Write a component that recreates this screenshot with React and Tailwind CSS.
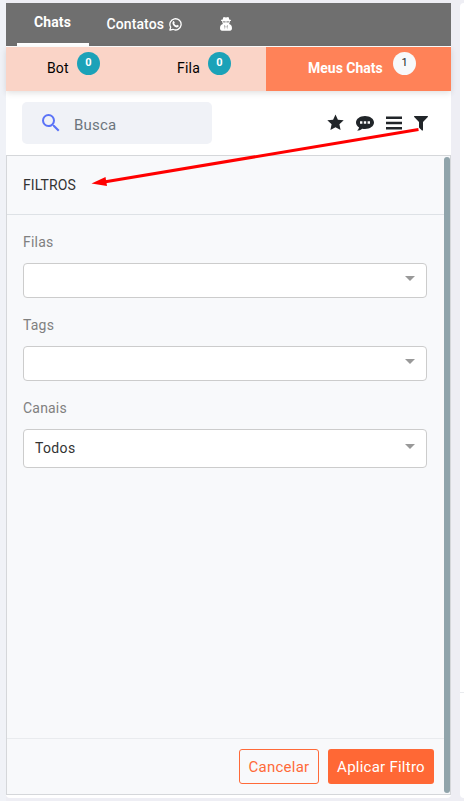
import React from "react";
import { MdSearch } from "react-icons/md";

function StarIcon() {
  return (
    <svg width="17" height="17" viewBox="0 0 17 17" className="block">
      <path fill="#212529" d="M8.500 .4 10.900 5.700 16.700 6.300 12.400 10.300 13.600 16.100 8.500 13.200 3.400 16.100 4.600 10.300 .3 6.300 6.100 5.700Z" />
    </svg>
  );
}

function CommentIcon() {
  return (
    <svg width="18" height="17" viewBox="0 0 18 17" className="block">
      <path
        fill="#212529"
        fillRule="evenodd"
        d="M9 1C4 1 0 3.900 0 7.500c0 2 1.200 3.700 3.100 4.900-.3 1.300-1 2.300-2 3.200 1.900 0 3.700-.7 5.200-1.900.9.200 1.800.3 2.700.3 5 0 9-2.900 9-6.500S14 1 9 1ZM4 6.300h2.400v2.400H4Zm3.800 0h2.400v2.400H7.800Zm3.800 0H14v2.400h-2.400Z"
      />
    </svg>
  );
}

function BarsIcon() {
  return (
    <svg width="16" height="14" viewBox="0 0 16 14" className="block">
      <path fill="#212529" d="M0 .5h16v2.500H0ZM0 5.700h16v2.500H0ZM0 10.900h16v2.500H0Z" />
    </svg>
  );
}

function FilterIcon() {
  return (
    <svg width="14" height="15" viewBox="0 0 14 15" className="block">
      <path fill="#212529" d="M.6 0h12.800c.6 0 .8.600.4 1L9 6v8c0 .6-.6.800-1 .4l-2.600-2.500c-.3-.3-.4-.5-.4-.9V6L.2 1C-.2.600 0 0 .6 0Z" />
    </svg>
  );
}

function WhatsappIcon() {
  return (
    <svg width="13" height="13" viewBox="0 0 13 13" className="block">
      <path
        fill="none"
        stroke="#fff"
        strokeWidth="1.300"
        strokeLinejoin="round"
        d="M.9 12.100 1.700 9.200A5.600 5.600 0 1 1 3.900 11.300Z"
      />
      <path
        fill="#fff"
        d="M4.200 3.300c.3-.3.800-.3 1 .1l.5 1.200c.1.300-.1.500-.5 1 .5 1 1.200 1.600 2.200 2 .5-.5.700-.9 1-.7l1.200.6c.3.200.2.700 0 1.100-.3.600-1.300 1-2 .8C5.700 8.900 4.300 7.700 3.600 5.900c-.3-.9-.1-1.900.6-2.600Z"
      />
    </svg>
  );
}

function SecretIcon() {
  return (
    <svg width="12" height="14" viewBox="0 0 12 14" className="block">
      <path
        fill="#fff"
        d="M3.900 0 6 .6 8.100 0c.6 0 1 1.400 1.200 2.500 1 .2 1.700.5 1.700.9 0 .3-.4.500-1.100.7-.1 1-.3 2-.8 2.900 1.700.4 2.900 1.600 2.900 4 0 1.800-.8 2.700-2 2.700H2c-1.200 0-2-.9-2-2.700 0-2.400 1.200-3.600 2.900-4-.5-.9-.7-1.900-.8-2.900C1.400 3.900 1 3.700 1 3.400c0-.4.700-.7 1.700-.9C2.900 1.400 3.300 0 3.900 0Z"
      />
      <path fill="#8d8d8d" d="M2.900 4.300h2.700v1.200H3.300ZM6.400 4.300h2.700l-.4 1.200H6.400ZM4.100 8l1.300 1-.5 3.400ZM7.900 8 6.600 9l.5 3.400Z" />
    </svg>
  );
}

function Tab({ label, count, className, labelClass, badgeClass }) {
  return (
    <div className={"flex h-full " + className}>
      <span className={"mt-[11px] text-[14px] leading-[20px] whitespace-nowrap " + labelClass}>{label}</span>
      <span className={"mt-[5px] flex h-[23px] w-[23px] justify-center rounded-full text-[11px] leading-[21px] " + badgeClass}>
        {count}
      </span>
    </div>
  );
}

function Field({ label, value, box }) {
  return (
    <div className="mb-[18px]">
      <div className="mb-[11px] h-[19px] text-[14px] leading-[19px] tracking-[0.2px] text-[#808080]">{label}</div>
      <div className={"flex justify-between rounded-[4px] border border-[#ccc] bg-white pr-[11px] pl-[11px] " + box}>
        <span className="mb-px self-center text-[14px] leading-[20px] tracking-[0.35px] text-[#333]">{value}</span>
        <span
          className={
            "mr-[0.5px] h-0 w-0 border-x-[5.5px] border-t-[5px] border-x-transparent border-t-[#999] " +
            (value ? "mt-[14px]" : "mt-[12px]")
          }
        />
      </div>
    </div>
  );
}

export default function App() {
  return (
    <div className="relative flex h-[801px] w-[464px] overflow-hidden bg-[#eeeef4] font-[Roboto,sans-serif]">
      <div className="w-[6px] shrink-0 bg-[#f0f2f7]" />
      <div className="mt-[3px] flex h-[795px] w-[445px] shrink-0 flex-col rounded-b-[4px] bg-white">
        <nav className="flex h-[43px] shrink-0 bg-[#6f6f6f] text-[14px] text-white">
          <div className="ml-[11px] h-[43px] w-[72px] border-b-[3px] border-white pt-[9px] pl-[17px] leading-[20px] font-bold tracking-[0.1px]">
            Chats
          </div>
          <div className="flex h-[42px] w-[94px] items-center pl-[17.500px] font-medium tracking-[0.1px]">
            <span className="w-[62px]">Contatos</span>
            <WhatsappIcon />
          </div>
          <div className="flex h-[42px] items-center pl-[37px]">
            <SecretIcon />
          </div>
        </nav>
        <div className="mt-px flex h-[44px] shrink-0 text-black shadow-[0_2px_6px_rgba(0,0,0,0.12)]">
          <Tab label="Bot" count="0" className="w-[130px] bg-[#fad4c7]" labelClass="ml-[41px] w-[30px] tracking-[0.1px]" badgeClass="bg-[#1ba2b8] font-bold text-white" />
          <Tab label="Fila" count="0" className="w-[130px] bg-[#fad4c7]" labelClass="ml-[41px] w-[31px] tracking-[0.2px]" badgeClass="bg-[#1ba2b8] font-bold text-white" />
          <Tab label="Meus Chats" count="1" className="w-[185px] bg-[#ff8258]" labelClass="ml-[42px] w-[85px] font-bold text-white" badgeClass="bg-[#f8f9fa] text-[#212529]" />
        </div>
        <div className="flex h-[64px] shrink-0 pt-[11px] pl-[16px] text-[#212529]">
          <div className="flex h-[42px] w-[190px] items-center rounded-[5px] bg-[#f0f2f7]">
            <MdSearch size={24} className="mb-px ml-[17px] text-[#5b73f7]" />
            <span className="mt-[3px] ml-[11px] text-[15px] leading-[20px] tracking-[0.2px] text-[#6c757d]">Busca</span>
          </div>
          <div className="mt-[12px] ml-[115px] flex h-[18px]">
            <StarIcon />
            <span className="mt-px ml-[12px]"><CommentIcon /></span>
            <span className="mt-[2px] ml-[12px]"><BarsIcon /></span>
            <span className="mt-[2px] ml-[12px]"><FilterIcon /></span>
          </div>
        </div>
        <section className="flex h-[640px] shrink-0 border border-[#d5d7da] bg-[#f8f9fb]">
          <div className="flex w-[437px] flex-col">
            <div className="h-[59px] shrink-0 border-b border-[#dee2e6] pt-[19px] pl-[16px] text-[14px] leading-[20px] tracking-[0.1px] text-[#333]">
              FILTROS
            </div>
            <div className="flex-1 pt-[18px] pr-[17px] pl-[16px]">
              <Field label="Filas" value="" box="h-[35px]" />
              <Field label="Tags" value="" box="h-[35px]" />
              <Field label="Canais" value="Todos" box="h-[39px]" />
            </div>
            <div className="flex h-[56px] shrink-0 justify-end gap-[9px] border-t border-[#e9ebee] pt-[10px] pr-[10px] text-[15px] tracking-[0.25px]">
              <button className="h-[35px] w-[80px] rounded-[3px] border border-[#ff6a39] pt-px text-[#ff6a39]">Cancelar</button>
              <button className="h-[35px] w-[106px] rounded-[3px] bg-[#ff6835] pt-px text-white">Aplicar Filtro</button>
            </div>
          </div>
          <div className="mt-px h-[636px] w-[6px] rounded-[3px] bg-[#90a4ab]" />
        </section>
      </div>
      <div className="mt-[3px] ml-[9px] h-[795px] w-[4px] shrink-0 rounded-l-[4px] bg-white pt-[689px]">
        <div className="h-px bg-[#e9ebee]" />
      </div>
      <svg className="absolute inset-0" width="464" height="801">
        <path d="M418.500 129.500 L104 182" stroke="#f00" strokeWidth="3" />
        <path d="M91.500 183.500 L105.500 177 L107 186 Z" fill="#f00" />
      </svg>
    </div>
  );
}
